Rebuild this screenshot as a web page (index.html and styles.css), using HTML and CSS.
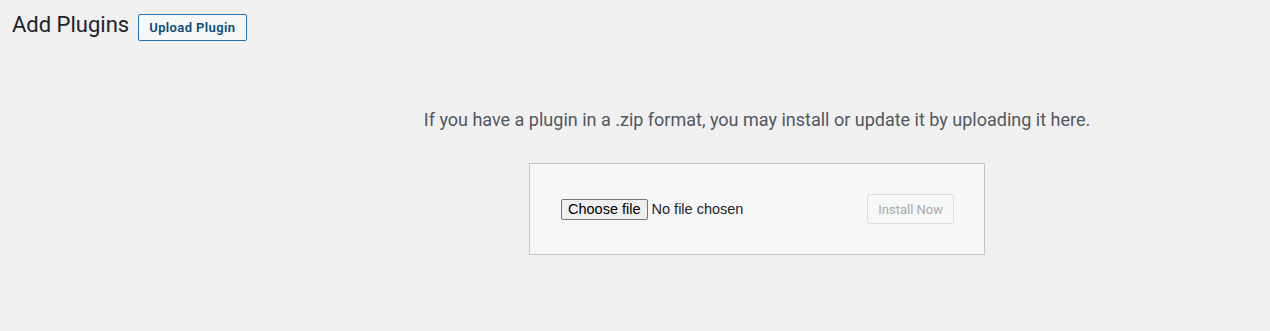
FILE: index.html
```html
<!DOCTYPE html>
<html lang="en">
<head>
    <meta charset="UTF-8">
    <meta name="viewport" content="width=device-width, initial-scale=1.0">
    <title>Add Plugins</title>
    <link rel="stylesheet" href="styles.css">
</head>
<body>
    <div class="wrap">
        <div class="page-head">
            <h1 class="page-title">Add Plugins</h1>
            <a href="#" class="page-title-action">Upload Plugin</a>
        </div>

        <div class="upload-plugin">
            <p class="install-help">If you have a plugin in a .zip format, you may install or update it by uploading it here.</p>
            <form class="upload-form" action="#" method="post">
                <label class="file-field">
                    <input type="file" name="pluginzip" accept=".zip" class="file-input">
                    <span class="file-btn">Choose file</span>
                    <span class="file-name">No file chosen</span>
                </label>
                <button type="submit" class="install-btn" disabled>Install Now</button>
            </form>
        </div>
    </div>
</body>
</html>
```

FILE: styles.css
```css
body {
    margin: 0;
    background: #f0f0f1;
    color: #1d2327;
    font-family: Roboto, "Liberation Sans", sans-serif;
}

.wrap {
    padding-left: 12px;
}

.page-head {
    display: flex;
    align-items: flex-start;
}

.page-title {
    margin: 0 9px 0 0;
    padding: 10px 0 4px;
    font-size: 22px;
    font-weight: 400;
    line-height: 30px;
    color: #1d2327;
}

.page-title-action {
    margin-top: 14px;
    padding: 5px 10px;
    font-size: 13px;
    font-weight: 600;
    line-height: 15px;
    letter-spacing: 0.4px;
    color: #0a4b78;
    text-decoration: none;
    background: #f6f7f7;
    border: 1px solid #2271b1;
    border-radius: 2px;
}

.upload-plugin {
    margin-left: 232px;
    text-align: center;
}

.install-help {
    margin: 0;
    padding-top: 62px;
    font-size: 18px;
    line-height: 27px;
    color: #50575e;
}

.upload-form {
    display: inline-flex;
    justify-content: space-between;
    align-items: center;
    width: 394px;
    margin-top: 30px;
    padding: 30px;
    background: #f6f7f7;
    border: 1px solid #c3c4c7;
}

.file-field {
    display: flex;
    align-items: center;
    gap: 4px;
    margin-left: 1px;
    font-family: "Liberation Sans", Arial, sans-serif;
    font-size: 14.5px;
    color: #1d2327;
    cursor: pointer;
}

.file-input {
    display: none;
}

.file-btn {
    padding: 2px 6px;
    line-height: 15px;
    color: #000;
    background: #efefef;
    border: 1px solid #767676;
    border-radius: 2px;
}

.install-btn {
    height: 30px;
    padding: 0 10px;
    font-family: Roboto, "Liberation Sans", sans-serif;
    font-size: 13px;
    color: #a7aaad;
    background: #f6f7f7;
    border: 1px solid #dcdcde;
    border-radius: 3px;
}
```
